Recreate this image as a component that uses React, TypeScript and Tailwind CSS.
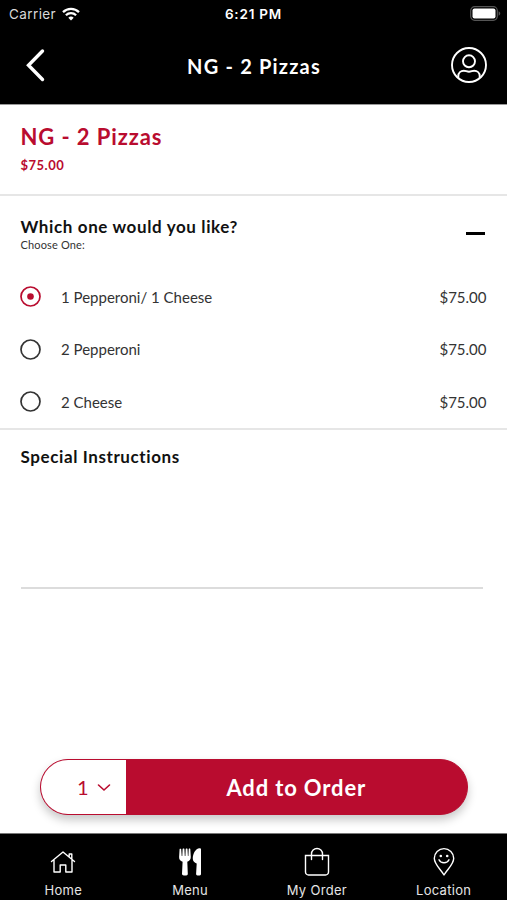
import type { ReactNode } from 'react';

interface Option {
  label: string;
  price: string;
}

interface Tab {
  label: string;
  icon: ReactNode;
}

const options: Option[] = [
  { label: '1 Pepperoni/ 1 Cheese', price: '$75.00' },
  { label: '2 Pepperoni', price: '$75.00' },
  { label: '2 Cheese', price: '$75.00' },
];

const tabs: Tab[] = [
  { label: 'Home', icon: <HomeIcon /> },
  { label: 'Menu', icon: <MenuIcon /> },
  { label: 'My Order', icon: <BagIcon /> },
  { label: 'Location', icon: <PinIcon /> },
];

function HomeIcon() {
  return (
    <svg width="26" height="30" viewBox="0 0 26 30" fill="none" stroke="#fff" strokeWidth="1.4" strokeLinejoin="round" strokeLinecap="round">
      <path d="M1.5 14.5 13 5l11.500 9.500M4 13V25h6.200v-7h5.600v7H22V13M19.200 9.500V7h2.600v5" />
    </svg>
  );
}

function MenuIcon() {
  return (
    <svg width="26" height="30" viewBox="0 0 26 30" fill="#fff">
      <path d="M2.600 2C3 1.500 3.900 1.500 4.200 2l.5 7h.6l.3-7c.4-.6 1.500-.6 1.800 0l.4 7h.6l.3-7c.4-.6 1.500-.6 1.800 0l.4 7h.5l.3-7c.4-.6 1.300-.5 1.600 0l.5 8c0 2.500-1.300 3.900-3.500 4.800l.5 12.200c0 1.400-1.200 1.500-2.700 1.500S5 28.400 5 27l.6-12.200C3.300 13.900 2 12.500 2.100 10z" />
      <path d="M24 2v25c0 1.100-1 1.500-2.400 1.500-1.500 0-2.500-.4-2.500-1.500l.6-10.500c-2.200-.7-3.800-2.400-3.900-4.500C15.600 7 18.500 1.500 22.500 1.300 23.500 1.200 24 1.500 24 2z" />
    </svg>
  );
}

function BagIcon() {
  return (
    <svg width="26" height="30" viewBox="0 0 26 30" fill="none" stroke="#fff" strokeWidth="1.4" strokeLinecap="round">
      <path d="M1.500 8.500h23V25a3 3 0 0 1-3 3h-17a3 3 0 0 1-3-3zM7.500 12.500V7a5.500 5.500 0 0 1 11 0v5.500" />
    </svg>
  );
}

function PinIcon() {
  return (
    <svg width="26" height="30" viewBox="0 0 26 30" fill="none" stroke="#fff" strokeWidth="1.4" strokeLinecap="round" strokeLinejoin="round">
      <path d="M13 28C9.500 22 3.300 17.500 3.300 11.300a9.700 9.700 0 0 1 19.400 0C22.700 17.500 16.500 22 13 28z" />
      <path d="M8 12.800c1.800 4 8.200 4 10 0" />
      <circle cx="9.800" cy="9" r="1.300" fill="#fff" stroke="none" />
      <circle cx="16.200" cy="9" r="1.300" fill="#fff" stroke="none" />
    </svg>
  );
}

function StatusBar() {
  return (
    <div className="grid h-7 grid-cols-3 items-center px-[9px] font-['Inter',sans-serif] text-[13.5px] text-white">
      <div className="flex items-center gap-1.5">
        <span className="tracking-[0.4px] text-[#d8d8d8]">Carrier</span>
        <svg width="18" height="14" viewBox="0 0 18 14" fill="none" stroke="#fff" strokeWidth="2.300">
          <path d="M1 5.100a11.500 11.500 0 0 1 16 0M3.900 8.200a7.300 7.300 0 0 1 10.200 0" />
          <path d="M9 13.500 6.300 10.700a3.900 3.900 0 0 1 5.400 0z" fill="#fff" stroke="none" />
        </svg>
      </div>
      <span className="text-center font-semibold tracking-[0.8px] whitespace-nowrap">6:21 PM</span>
      <svg className="-mt-0.5 -mr-[3px] ml-auto" width="31" height="15" viewBox="0 0 31 15">
        <rect x="0.700" y="0.700" width="26.600" height="13.600" rx="4" fill="none" stroke="#555" strokeWidth="1.200" />
        <rect x="2.500" y="2.500" width="23" height="10" rx="2" fill="#fff" />
        <path d="M28.600 5.300c2.200.8 2.200 3.600 0 4.400z" fill="#555" />
      </svg>
    </div>
  );
}

function Header() {
  return (
    <header className="h-[105px] border-b border-[#999] bg-black">
      <StatusBar />
      <div className="flex h-[74px] items-center justify-between pr-5 pl-[25px]">
        <svg width="37" height="34" viewBox="0 0 37 34" fill="none" stroke="#fff" strokeWidth="3.400" strokeLinecap="round" strokeLinejoin="miter">
          <path d="M17.500 3 3.500 17.300 17.500 31.500" />
        </svg>
        <h1 className="pt-0.5 pr-[5px] text-[20px] font-bold tracking-[1.2px] text-white">NG - 2 Pizzas</h1>
        <svg width="36" height="36" viewBox="0 0 36 36" fill="none" stroke="#fff" strokeWidth="1.900">
          <circle cx="18" cy="18" r="17" />
          <circle cx="18" cy="14.300" r="6" />
          <path d="M7.300 31v-2c0-3.300 2.500-5.300 5.500-5.300 2 0 3 1 5.200 1s3.200-1 5.200-1c3 0 5.500 2 5.500 5.300v2" />
        </svg>
      </div>
    </header>
  );
}

export default function App() {
  return (
    <div className="flex h-[900px] w-[507px] flex-col bg-white font-['Lato',sans-serif] text-[#111]">
      <Header />

      <section className="h-[91px] border-b-2 border-[#e6e6e6] px-[20.5px] pt-[17px] text-[#b90c2f]">
        <h2 className="text-[22px] leading-[30px] font-bold tracking-[0.9px]">NG - 2 Pizzas</h2>
        <p className="mt-1 text-[13px] leading-[18px] font-bold tracking-[0.5px]">$75.00</p>
      </section>

      <section className="h-[234px] border-b-2 border-[#e6e6e6] px-[20.5px] pt-5">
        <div className="flex justify-between">
          <div>
            <h3 className="text-[17px] leading-[22px] font-bold tracking-[0.62px]">Which one would you like?</h3>
            <p className="text-[11px] leading-[14px] tracking-[0.15px] text-[#333]">Choose One:</p>
          </div>
          <div className="mt-4 mr-0.5 h-[3px] w-[19px] bg-black" />
        </div>
        <ul className="mt-[18.5px]">
          {options.map((o, i) => (
            <li key={o.label} className="flex h-[52.500px] items-center text-[15px] text-[#333]">
              <svg className="-ml-[0.5px]" width="21" height="21" viewBox="0 0 21 21" fill="none">
                <circle cx="10.500" cy="10.500" r="9.500" stroke={i === 0 ? '#b90c2f' : '#333'} strokeWidth="1.700" />
                {i === 0 && <circle cx="10.500" cy="10.500" r="3.300" fill="#b90c2f" />}
              </svg>
              <span className="ml-5">{o.label}</span>
              <span className="ml-auto">{o.price}</span>
            </li>
          ))}
        </ul>
      </section>

      <section className="px-[20.5px] pt-4">
        <h3 className="text-[17px] leading-[22px] font-bold tracking-[0.6px]">Special Instructions</h3>
        <div className="mr-1 h-[121px] border-b-2 border-[#dcdcdc]" />
      </section>

      <div className="mt-auto mr-[39px] mb-[18px] ml-[39.5px] flex h-14 overflow-hidden rounded-full border border-[#b90c2f] bg-[#b90c2f] shadow-[0_5px_10px_rgba(0,0,0,0.22)]">
        <button className="flex w-[85px] items-center justify-end gap-2 bg-white pr-[15px] text-[20px] text-[#b90c2f]">
          1
          <svg width="14" height="9" viewBox="0 0 14 9" fill="none" stroke="currentColor" strokeWidth="1.600" strokeLinecap="round">
            <path d="m1.500 2 5.500 5 5.500-5" />
          </svg>
        </button>
        <button className="flex-1 text-[22px] font-bold tracking-[0.85px] text-white">Add to Order</button>
      </div>

      <nav className="grid h-[67px] grid-cols-4 border-t border-[#777] bg-black">
        {tabs.map((tab) => (
          <div key={tab.label} className="flex flex-col items-center pt-[13px] text-white">
            {tab.icon}
            <span className="mt-[5px] font-['Inter',sans-serif] text-[13px] leading-4 tracking-[0.3px] text-[#e5e5e5]">{tab.label}</span>
          </div>
        ))}
      </nav>
    </div>
  );
}
